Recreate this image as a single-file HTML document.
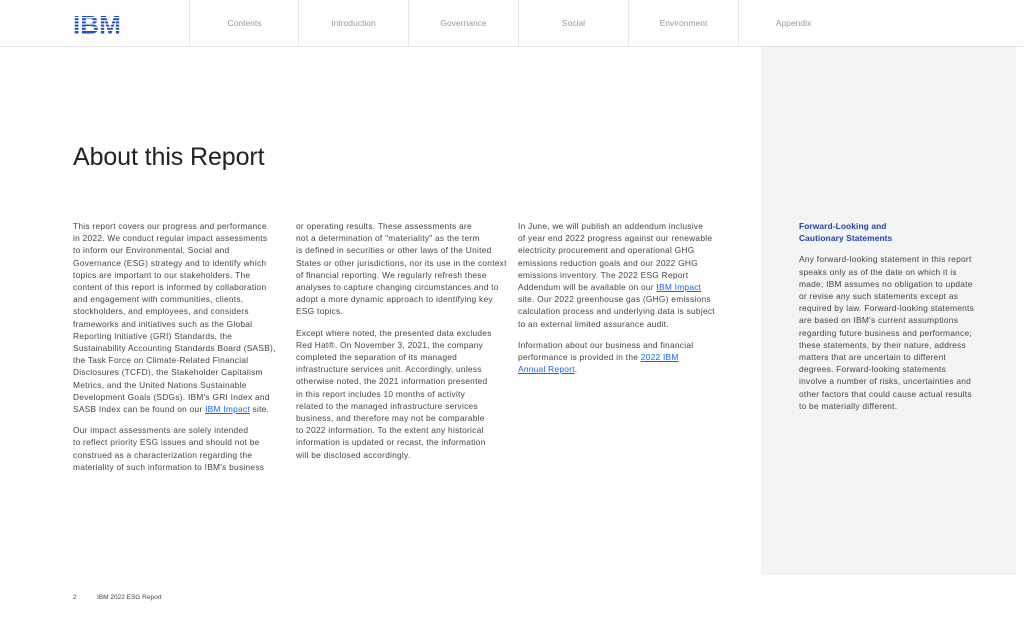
<!DOCTYPE html>
<html><head><meta charset="utf-8"><style>
*{margin:0;padding:0;box-sizing:border-box}
body{width:1024px;height:622px;background:#fff;font-family:"Liberation Sans",sans-serif;position:relative;overflow:hidden;color:#333}
.hdr{position:absolute;left:0;top:0;width:1024px;height:47px;border-bottom:1px solid #e4e4e4}
.nav{position:absolute;top:0;height:47px;width:110px;border-left:1px solid #e8e8e8;font-size:8.5px;color:#999;text-align:center;line-height:47px}
.logo{position:absolute;left:73px;top:15px}
.panel{position:absolute;left:761px;top:47px;width:255px;height:528px;background:#f4f4f4}
h1{position:absolute;left:73px;top:143px;font-weight:400;font-size:25px;color:#222;letter-spacing:-0.1px}
.col{position:absolute;font-size:8.4px;letter-spacing:0.25px;line-height:12.2px;color:#444;white-space:nowrap}
.col p{margin-bottom:9px}
a{color:#0f62fe;text-decoration:underline}
.ft{position:absolute;top:594px;font-size:6.5px;color:#444}
</style></head><body>
<div class="hdr">
<svg class="logo" width="48" height="19" viewBox="0 0 48 19">
<text x="0" y="18.5" font-family="Liberation Sans" font-weight="bold" font-size="25" textLength="48" lengthAdjust="spacingAndGlyphs" fill="#1f4dbf">IBM</text>
<g fill="#fff"><rect x="0" y="2" width="48" height="1.2"/><rect x="0" y="5.2" width="48" height="1.2"/><rect x="0" y="8.4" width="48" height="1.2"/><rect x="0" y="11.6" width="48" height="1.2"/><rect x="0" y="14.8" width="48" height="1.2"/></g>
</svg>
<div class="nav" style="left:189px">Contents</div>
<div class="nav" style="left:298px">Introduction</div>
<div class="nav" style="left:408px">Governance</div>
<div class="nav" style="left:518px">Social</div>
<div class="nav" style="left:628px">Environment</div>
<div class="nav" style="left:738px;border-right:0">Appendix</div>
</div>
<div class="panel"></div>
<h1>About this Report</h1>
<div class="col" style="left:73px;top:220px">
<p>This report covers our progress and performance<br>in 2022. We conduct regular impact assessments<br>to inform our Environmental, Social and<br>Governance (ESG) strategy and to identify which<br>topics are important to our stakeholders. The<br>content of this report is informed by collaboration<br>and engagement with communities, clients,<br>stockholders, and employees, and considers<br>frameworks and initiatives such as the Global<br>Reporting Initiative (GRI) Standards, the<br>Sustainability Accounting Standards Board (SASB),<br>the Task Force on Climate-Related Financial<br>Disclosures (TCFD), the Stakeholder Capitalism<br>Metrics, and the United Nations Sustainable<br>Development Goals (SDGs). IBM's GRI Index and<br>SASB Index can be found on our <a>IBM Impact</a> site.</p>
<p>Our impact assessments are solely intended<br>to reflect priority ESG issues and should not be<br>construed as a characterization regarding the<br>materiality of such information to IBM's business</p>
</div>
<div class="col" style="left:296px;top:220px">
<p>or operating results. These assessments are<br>not a determination of "materiality" as the term<br>is defined in securities or other laws of the United<br>States or other jurisdictions, nor its use in the context<br>of financial reporting. We regularly refresh these<br>analyses to capture changing circumstances and to<br>adopt a more dynamic approach to identifying key<br>ESG topics.</p>
<p>Except where noted, the presented data excludes<br>Red Hat®. On November 3, 2021, the company<br>completed the separation of its managed<br>infrastructure services unit. Accordingly, unless<br>otherwise noted, the 2021 information presented<br>in this report includes 10 months of activity<br>related to the managed infrastructure services<br>business, and therefore may not be comparable<br>to 2022 information. To the extent any historical<br>information is updated or recast, the information<br>will be disclosed accordingly.</p>
</div>
<div class="col" style="left:518px;top:220px">
<p>In June, we will publish an addendum inclusive<br>of year end 2022 progress against our renewable<br>electricity procurement and operational GHG<br>emissions reduction goals and our 2022 GHG<br>emissions inventory. The 2022 ESG Report<br>Addendum will be available on our <a>IBM Impact</a><br>site. Our 2022 greenhouse gas (GHG) emissions<br>calculation process and underlying data is subject<br>to an external limited assurance audit.</p>
<p>Information about our business and financial<br>performance is provided in the <a>2022 IBM<br>Annual Report</a>.</p>
</div>
<div class="col" style="left:799px;top:220px">
<p style="color:#1f3fb0;font-weight:bold;margin-bottom:9px;letter-spacing:0.1px">Forward-Looking and<br>Cautionary Statements</p>
<p>Any forward-looking statement in this report<br>speaks only as of the date on which it is<br>made; IBM assumes no obligation to update<br>or revise any such statements except as<br>required by law. Forward-looking statements<br>are based on IBM's current assumptions<br>regarding future business and performance;<br>these statements, by their nature, address<br>matters that are uncertain to different<br>degrees. Forward-looking statements<br>involve a number of risks, uncertainties and<br>other factors that could cause actual results<br>to be materially different.</p>
</div>
<div class="ft" style="left:73px">2</div>
<div class="ft" style="left:97px">IBM 2022 ESG Report</div>
</body></html>
